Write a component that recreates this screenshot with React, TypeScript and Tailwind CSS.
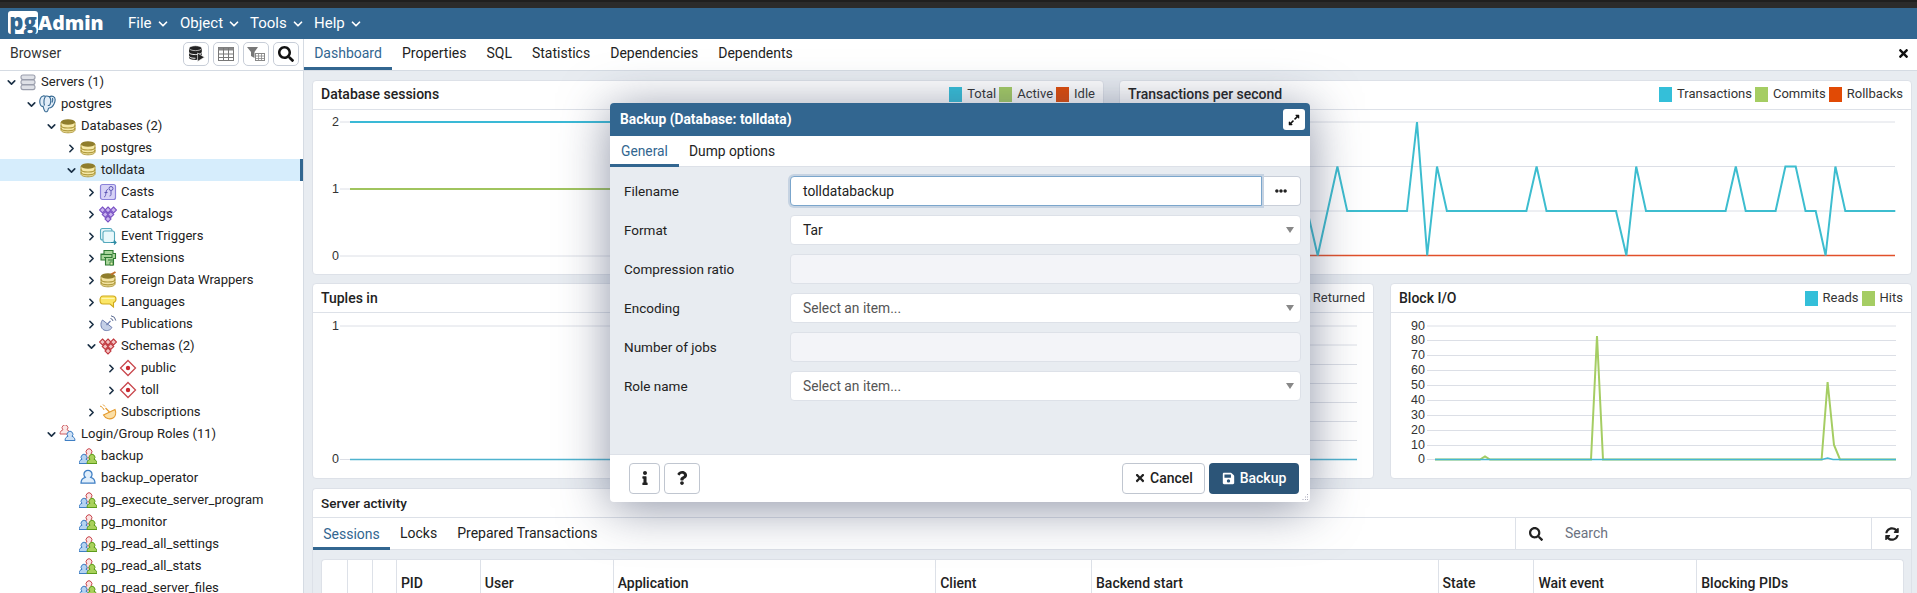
import React from "react";
import { ChevronDown, ChevronRight } from "lucide-react";
import { FaTimes, FaSave, FaInfo, FaQuestion, FaExpandAlt, FaSearch, FaSyncAlt, FaEllipsisH } from "react-icons/fa";

const S = ({ children }: { children: React.ReactNode }) => (
  <svg width="18" height="18" viewBox="0 0 18 18" className="shrink-0">{children}</svg>
);

const DbStack = ({ top = "#8f7d2c", fill = "#f6e9a8", line = "#b09a3d" }) => (
  <>
    <path d="M2 5v8c0 1.600 3.200 2.800 7 2.800s7-1.200 7-2.800V5z" fill={fill} stroke={line} strokeWidth="1" />
    <path d="M2 8.200c0 1.600 3.200 2.800 7 2.800s7-1.200 7-2.800M2 11c0 1.600 3.200 2.800 7 2.800s7-1.200 7-2.800" fill="none" stroke={line} strokeWidth="1.200" />
    <ellipse cx="9" cy="5" rx="7" ry="2.800" fill={top} />
  </>
);

const Diamonds = ({ c, f }: { c: string; f: string }) => (
  <>
    {[[3.5, 5], [9, 5], [14.5, 5], [6.25, 9.500], [11.75, 9.500], [9, 14]].map(([x, y], i) => (
      <path key={i} d={`M${x} ${y - 3}L${x + 3} ${y}L${x} ${y + 3}L${x - 3} ${y}z`} fill={f} stroke={c} strokeWidth="1.100" />
    ))}
  </>
);

const User = ({ x, y, c, f }: { x: number; y: number; c: string; f: string }) => (
  <g transform={`translate(${x} ${y})`}>
    <path d="M0 8c0-2.600 1.600-3.800 3-4.200a2.900 2.900 0 1 1 4 0c1.400.4 3 1.600 3 4.200z" fill={f} stroke={c} strokeWidth="1" />
  </g>
);

const icons: Record<string, React.ReactNode> = {
  servers: (
    <S>
      {[2, 7, 12].map((y) => (
        <rect key={y} x="2" y={y} width="14" height="4.600" rx="2" fill="#dfe1e7" stroke="#9a9eac" strokeWidth="1.100" />
      ))}
    </S>
  ),
  pg: (
    <svg width="18" height="18" viewBox="0 0 18 18" className="shrink-0">
      <path d="M4 1C1.500 1.500.3 5 1 8.500c.4 2 1.800 3.400 3 2.800.5 1.200.7 3.700 2 5 1.200 1 2.700.5 3-1.300.2-1.200.3-2 1-2 2.500 0 3.800-1.500 5-4 1.300-2.800 1.800-6.200-.7-7.500-1.600-.7-3-.3-3.800.2C9 1 7.500.8 6.500 1.200 5.800 1 4.800.8 4 1z" fill="#e2edf8" stroke="#336791" strokeWidth="1.100" />
      <path d="M6.500 1.500C5 3.500 4.500 7 5.500 10.500M10.500 1.800c1.300 1.700 1.500 5 .6 7.500-.4 1-1.300 1.400-2.300 1.200M13.500 3c.5 1.300.3 3-.5 4.500" fill="none" stroke="#336791" strokeWidth="1.100" />
    </svg>
  ),
  db: <S><DbStack /></S>,
  casts: (
    <S>
      <rect x="1.500" y="1.500" width="15" height="15" rx="2" fill="#d7d3f6" stroke="#8b82d9" strokeWidth="1.200" />
      <path d="M5 14c1-.3 1.500-1 1.700-2.500L7.300 8c.2-1 .8-1.500 1.700-1.500M5.500 9.500h3" fill="none" stroke="#5e57b5" strokeWidth="1" />
      <circle cx="12" cy="5.500" r="2" fill="none" stroke="#5e57b5" strokeWidth="1" />
      <path d="M12 8v3.500c0 1-.7 1.500-1.500 1.500" fill="none" stroke="#5e57b5" strokeWidth="1" />
    </S>
  ),
  catalogs: <S><Diamonds c="#7a52c4" f="#c9b3ee" /></S>,
  triggers: (
    <S>
      <rect x="1.500" y="1.500" width="11.500" height="11.500" rx="2" fill="#e3f5f8" stroke="#55a9bd" strokeWidth="1.100" />
      <rect x="4" y="4" width="11.500" height="11.500" rx="2" fill="#e8f8fb" stroke="#55a9bd" strokeWidth="1.100" />
      <path d="M12 15.500h4.500M15 13.500l2 2-2 2" fill="none" stroke="#2c8aa3" strokeWidth="1.200" />
    </S>
  ),
  ext: (
    <S>
      <path d="M5 1.500h9v3h2.500v5h-2v6.500H6.500v-5H2V5h3z" fill="#a9d59b" stroke="#2f7a33" strokeWidth="1.100" />
      <path d="M2 5.500h11v3H5M6.500 11v-2.500M9 11h5" fill="none" stroke="#2f7a33" strokeWidth="1.100" />
      <path d="M11 13h3v3h-3z" fill="#dff0b0" stroke="#2f7a33" strokeWidth=".8" />
    </S>
  ),
  fdw: (
    <S>
      <DbStack top="#8f7d2c" fill="#f3e3a1" />
      <path d="M12 3.500l4.500-2.500" stroke="#c2702c" strokeWidth="2" fill="none" />
    </S>
  ),
  lang: (
    <S>
      <path d="M4 3h10c2 0 3 1.300 3 3s-1 3-2.500 3.500V14l-3.500-3H4C2 11 1 9 1 7s1-4 3-4z" fill="#fbe666" stroke="#d0a91c" strokeWidth="1.100" />
      <path d="M2.500 5.500h13" stroke="#fff6b0" strokeWidth="1" />
    </S>
  ),
  pub: (
    <S>
      <path d="M3.500 5C.8 8.500 1.800 13.500 5 15c3 1.300 6.500.3 8-2.500z" fill="#c4cfe6" stroke="#6f7fb0" strokeWidth="1" />
      <path d="M7.500 10l4-4" stroke="#6f7fb0" strokeWidth="1.200" />
      <path d="M11.500 3.500a3 3 0 0 1 2.500 2.500M12 .8a5.500 5.500 0 0 1 4.800 4.800" fill="none" stroke="#58688f" strokeWidth="1" />
    </S>
  ),
  schemas: <S><Diamonds c="#c0393f" f="#f3c4c4" /></S>,
  schema: (
    <S>
      <path d="M9 1.500L16.500 9 9 16.500 1.500 9z" fill="#fff" stroke="#c9474d" strokeWidth="1.300" />
      <circle cx="9" cy="9" r="2.200" fill="#c9272f" />
    </S>
  ),
  subs: (
    <S>
      <path d="M16 6.500c1.500 3.500.5 7-2 8.500-3.500 2-7.500.5-9.500-3z" fill="#fbdfa6" stroke="#e49a2e" strokeWidth="1.100" />
      <path d="M10.500 9L6.500 5" stroke="#e49a2e" strokeWidth="1.200" />
      <path d="M5 7a3 3 0 0 0-2-2.500M4 1.500l2 2M1 3l2 1" fill="none" stroke="#e49a2e" strokeWidth="1" />
    </S>
  ),
  roles: (
    <S>
      <User x={1} y={1} c="#cc5f63" f="#fbe7e7" />
      <User x={6} y={7.500} c="#3f7fc4" f="#cfe2f6" />
    </S>
  ),
  group: (
    <S>
      <User x={5} y={3} c="#c9474d" f="#fbe3e3" />
      <User x={0} y={8.500} c="#3f7fc4" f="#b5d3f1" />
      <User x={8} y={8.500} c="#5d9c1c" f="#a9d15b" />
    </S>
  ),
  role: (
    <S>
      <g transform="translate(2 3) scale(1.400)">
        <path d="M0 8c0-2.600 1.600-3.800 3-4.200a2.900 2.900 0 1 1 4 0c1.400.4 3 1.600 3 4.200z" fill="#e0eefb" stroke="#3f7fc4" strokeWidth=".9" />
      </g>
    </S>
  ),
};

const levelPad = ["pl-[5px]", "pl-[25px]", "pl-[45px]", "pl-[65px]", "pl-[85px]", "pl-[105px]"];

const rows: [number, "d" | "r" | "", string, string, boolean?][] = [
  [0, "d", "servers", "Servers (1)"],
  [1, "d", "pg", "postgres"],
  [2, "d", "db", "Databases (2)"],
  [3, "r", "db", "postgres"],
  [3, "d", "db", "tolldata", true],
  [4, "r", "casts", "Casts"],
  [4, "r", "catalogs", "Catalogs"],
  [4, "r", "triggers", "Event Triggers"],
  [4, "r", "ext", "Extensions"],
  [4, "r", "fdw", "Foreign Data Wrappers"],
  [4, "r", "lang", "Languages"],
  [4, "r", "pub", "Publications"],
  [4, "d", "schemas", "Schemas (2)"],
  [5, "r", "schema", "public"],
  [5, "r", "schema", "toll"],
  [4, "r", "subs", "Subscriptions"],
  [2, "d", "roles", "Login/Group Roles (11)"],
  [3, "", "group", "backup"],
  [3, "", "role", "backup_operator"],
  [3, "", "group", "pg_execute_server_program"],
  [3, "", "group", "pg_monitor"],
  [3, "", "group", "pg_read_all_settings"],
  [3, "", "group", "pg_read_all_stats"],
  [3, "", "group", "pg_read_server_files"],
];

const ToolBtn = ({ children }: { children: React.ReactNode }) => (
  <div className="w-[26px] h-[24px] rounded-[5px] border border-[#c8ced8] bg-white flex items-center justify-center">{children}</div>
);

const Sidebar = () => (
  <aside className="w-[304px] shrink-0 border-r border-[#d5dbe3] bg-white flex flex-col overflow-hidden">
    <div className="h-[32px] shrink-0 border-b border-[#d5dbe3] flex items-center justify-between pl-[10px] pr-[4px] pb-[2px]">
      <span className="text-[14px] text-[#333]">Browser</span>
      <div className="flex gap-[4px]">
        <ToolBtn>
          <svg width="17" height="17" viewBox="0 0 16 16">
            <path d="M1 3v9c0 1.200 2.500 2 6 2s6-.8 6-2V3z" fill="#222" />
            <ellipse cx="7" cy="3" rx="6" ry="2.300" fill="#222" stroke="#fff" strokeWidth=".6" />
            <path d="M1 7c0 1.200 2.500 2 6 2s6-.8 6-2M1 10.500c0 1.200 2.500 2 6 2" stroke="#fff" fill="none" strokeWidth=".9" />
            <path d="M9 7.500l6.500 4-6.500 4z" fill="#222" stroke="#fff" strokeWidth=".6" />
          </svg>
        </ToolBtn>
        <ToolBtn>
          <svg width="16" height="14" viewBox="0 0 16 14">
            <rect x=".5" y=".5" width="15" height="13" fill="#fff" stroke="#777" />
            <rect x=".5" y=".5" width="15" height="3" fill="#888" />
            <path d="M5.500 1v12M10.500 1v12M1 7h14M1 10.500h14" stroke="#777" />
          </svg>
        </ToolBtn>
        <ToolBtn>
          <svg width="18" height="16" viewBox="0 0 18 16">
            <path d="M0 1h11L7.500 6v6L4 10V6z" fill="#777" />
            <rect x="8.500" y="7.500" width="9" height="7" fill="#fff" stroke="#888" />
            <path d="M8.500 10h9M8.500 12.500h9M11.500 8v7M14.500 8v7" stroke="#888" strokeWidth=".8" />
          </svg>
        </ToolBtn>
        <ToolBtn>
          <FaSearch size={16} color="#111" />
        </ToolBtn>
      </div>
    </div>
    <div className="flex flex-col text-[13.050px] text-[#222]">
      {rows.map(([lvl, chev, icon, label, sel], i) => (
        <div key={i} className={`h-[22px] shrink-0 flex items-center ${levelPad[lvl]} ${sel ? "bg-[#d6edfc] border-r-[3px] border-[#326690]" : ""}`}>
          <span className="w-[13px] flex justify-center">
            {chev === "d" && <ChevronDown size={13} strokeWidth={3} color="#1c3146" />}
            {chev === "r" && <ChevronRight size={13} strokeWidth={3} color="#1c3146" />}
          </span>
          <span className="w-[20px] flex justify-center">{icons[icon]}</span>
          <span className="ml-[3px] whitespace-nowrap">{label}</span>
        </div>
      ))}
    </div>
  </aside>
);

const Legend = ({ items }: { items: [string, string][] }) => (
  <div className="flex items-center gap-[3px] text-[13px] text-[#333]">
    {items.map(([c, t]) => (
      <div key={t} className="flex items-center gap-[5px]">
        <span className="w-[13px] h-[15px] block" style={{ background: c }} />
        <span>{t}</span>
      </div>
    ))}
  </div>
);

const Panel = ({ title, legend, className, headerClass, children }: { title?: string; legend?: [string, string][]; className: string; headerClass: string; children: React.ReactNode }) => (
  <section className={`bg-white rounded-[4px] border border-[#dde1e8] flex flex-col overflow-hidden ${className}`}>
    <header className={`h-[29px] shrink-0 border-b border-[#dde1e8] flex items-center justify-between pl-[8px] pr-[8px] ${headerClass}`}>
      <span className="text-[14px] font-medium text-[#222] whitespace-nowrap">{title}</span>
      {legend && <Legend items={legend} />}
    </header>
    {children}
  </section>
);

const Chart = ({ x, y, w, h, children }: { x: number; y: number; w: number; h: number; children: React.ReactNode }) => (
  <svg width={w} height={h} viewBox={`${x} ${y} ${w} ${h}`} className="block">{children}</svg>
);

const Grid = ({ ys, x1, x2 }: { ys: number[]; x1: number; x2: number }) => (
  <>{ys.map((y) => <line key={y} x1={x1} x2={x2} y1={y} y2={y} stroke="#dcdfe6" strokeWidth="1" />)}</>
);

const Lab = ({ x, y, t }: { x: number; y: number; t: string }) => (
  <text x={x} y={y + 3.500} textAnchor="end" fontSize="12.500" fontFamily="'Liberation Sans',sans-serif" fill="#333">{t}</text>
);

const txPts: [number, number][] = [
  [1309, 218], [1317.700, 255.500], [1337.400, 166.500], [1347.200, 211], [1407, 211], [1417, 122], [1427.200, 255.500], [1437, 166.500], [1446.900, 211],
  [1526.400, 211], [1536.600, 166.500], [1546.500, 211], [1616, 211], [1626.400, 255.500], [1636.200, 166.500], [1646, 211],
  [1725.600, 211], [1735.800, 166.500], [1745.700, 211], [1775.600, 211], [1785.400, 166.500], [1795.700, 166.500], [1805.500, 211],
  [1815.700, 211], [1825.600, 255.500], [1835.400, 166.500], [1845.300, 211], [1895.300, 211],
];

const cols = [
  ["w-[25px]", ""], ["w-[25px]", ""], ["w-[24px]", ""], ["w-[84px]", "PID"], ["w-[133px]", "User"], ["w-[323px]", "Application"],
  ["w-[156px]", "Client"], ["w-[347px]", "Backend start"], ["w-[96px]", "State"], ["w-[163px]", "Wait event"], ["w-[207px]", "Blocking PIDs"],
];

const MainArea = () => (
  <main className="flex-1 min-w-0 flex flex-col">
    <div className="h-[32px] shrink-0 bg-white border-b border-[#d5dbe3] flex items-stretch text-[14px] text-[#222] relative">
      <div className="w-[88px] h-[31px] pt-[1px] border-b-[3px] border-[#326690] text-[#326690] flex items-center justify-center">Dashboard</div>
      {["Properties", "SQL", "Statistics", "Dependencies", "Dependents"].map((t) => (
        <div key={t} className="px-[10px] flex items-center pb-[2px]">{t}</div>
      ))}
      <div className="ml-auto pr-[7px] pb-[2px] flex items-center"><FaTimes size={13} color="#111" /></div>
    </div>
    <div className="flex-1 min-h-0 bg-[#e8ecf1] pl-[8px] pr-[5px] pt-[9px] flex flex-col gap-[8px] overflow-hidden">
      <div className="flex gap-[15px] h-[195px] shrink-0">
        <Panel title="Database sessions" headerClass="pb-[2px]" className="w-[792px]" legend={[["#34bfd9", "Total"], ["#a5cd63", "Active"], ["#e14a05", "Idle"]]}>
          <Chart x={313} y={110} w={789} h={164}>
            <Grid ys={[122, 189, 256]} x1={340} x2={1090} />
            <Lab x={339} y={122} t="2" />
            <Lab x={339} y={189} t="1" />
            <Lab x={339} y={256} t="0" />
            <line x1={350} x2={1090} y1={122} y2={122} stroke="#3ab9d6" strokeWidth="2" />
            <line x1={350} x2={1090} y1={189} y2={189} stroke="#a0c45e" strokeWidth="2" />
          </Chart>
        </Panel>
        <Panel title="Transactions per second" headerClass="pb-[2px]" className="w-[793px]" legend={[["#34bfd9", "Transactions"], ["#a5cd63", "Commits"], ["#e14a05", "Rollbacks"]]}>
          <Chart x={1120} y={110} w={791} h={164}>
            <Grid ys={[122, 166.500, 211, 255.500]} x1={1160} x2={1895} />
            <line x1={1160} x2={1895} y1={255.500} y2={255.500} stroke="#e1502a" strokeWidth="1.500" />
            <polyline points={txPts.map((p) => p.join(",")).join(" ")} fill="none" stroke="#3dbdcf" strokeWidth="2" />
          </Chart>
        </Panel>
      </div>
      <div className="flex h-[196px] shrink-0 gap-[16px]">
        <Panel title="Tuples in" headerClass="pb-0" className="w-[523px]">
          <Chart x={313} y={313} w={521} h={165}>
            <Grid ys={[326, 459.500]} x1={340} x2={830} />
            <Lab x={339} y={326} t="1" />
            <Lab x={339} y={459.500} t="0" />
            <line x1={350} x2={830} y1={459.500} y2={459.500} stroke="#4fb3cf" strokeWidth="1.500" />
          </Chart>
        </Panel>
        <Panel headerClass="pb-0" className="w-[523px]" legend={[["#a5cd63", "Returned"]]}>
          <Chart x={852} y={313} w={521} h={165}>
            <Grid ys={[326, 345, 364.500, 383.500, 402.500, 421.500, 440.500]} x1={880} x2={1357} />
            <line x1={885} x2={1357} y1={459.500} y2={459.500} stroke="#4fb3cf" strokeWidth="1.500" />
          </Chart>
        </Panel>
        <Panel title="Block I/O" headerClass="pb-0" className="w-[522px]" legend={[["#34bfd9", "Reads"], ["#a5cd63", "Hits"]]}>
          <Chart x={1391} y={313} w={520} h={165}>
            <Grid ys={[326, 340.500, 355.500, 370.500, 385.500, 400.500, 415.500, 430.500, 445.500, 459.500]} x1={1427} x2={1896} />
            {[["90", 326], ["80", 340.500], ["70", 355.500], ["60", 370.500], ["50", 385.500], ["40", 400.500], ["30", 415.500], ["20", 430.500], ["10", 445.500], ["0", 459.500]].map(([t, y]) => (
              <Lab key={t as string} x={1425} y={y as number} t={t as string} />
            ))}
            <polyline points="1435,459.500 1480,459.500 1485,456.500 1490,459.500 1591,459.500 1597,336 1603,459.500 1821.600,459.500 1827.600,382 1834,445 1840,459.500 1896,459.500" fill="none" stroke="#a5cd63" strokeWidth="2" />
            <polyline points="1435,459.500 1822,459.500 1827.600,458 1833,459.500 1896,459.500" fill="none" stroke="#45b7d3" strokeWidth="1.500" />
          </Chart>
        </Panel>
      </div>
      <section className="flex-1 mt-[1px] bg-white rounded-t-[4px] border border-[#dde1e8] border-b-0 flex flex-col">
        <header className="h-[29px] shrink-0 border-b border-[#dde1e8] flex items-center pl-[8px] text-[13.500px] font-medium text-[#222]">Server activity</header>
        <div className="h-[32px] shrink-0 flex border-b border-[#dde1e8] text-[14px] text-[#222]">
          <div className="w-[77px] h-[32px] pt-[3px] border-b-[3px] border-[#326690] text-[#326690] flex items-center justify-center">Sessions</div>
          <div className="px-[10px] flex items-center">Locks</div>
          <div className="px-[10px] flex items-center">Prepared Transactions</div>
          <div className="ml-auto w-[356px] border-l border-[#dde1e8] flex items-center pl-[13px] gap-[22px]">
            <FaSearch size={14} color="#222" />
            <span className="text-[#6b7280]">Search</span>
          </div>
          <div className="w-[40px] border-l border-[#dde1e8] flex items-center justify-center"><FaSyncAlt size={14} color="#222" /></div>
        </div>
        <div className="flex-1 bg-[#e8ecf1] pt-[9px] pl-[8px]">
          <div className="flex h-[60px] w-[1583px] bg-white rounded-t-[4px] border border-[#dde1e8] border-b-0">
            {cols.map(([w, t], i) => (
              <div key={i} className={`${w} ${i ? "border-l border-[#dde1e8]" : ""} pl-[4px] pt-[13px] text-[14px] font-medium text-[#222] whitespace-nowrap`}>{t}</div>
            ))}
          </div>
        </div>
      </section>
    </div>
  </main>
);

const Field = ({ label, children }: { label: string; children: React.ReactNode }) => (
  <div className="flex items-center h-[30px]">
    <label className="w-[166px] shrink-0 text-[13.500px] text-[#222]">{label}</label>
    {children}
  </div>
);

const Select = ({ value, muted }: { value: string; muted?: boolean }) => (
  <div className={`flex-1 h-[30px] bg-white rounded-[4px] border border-[#dde1e8] flex items-center justify-between pl-[12px] pr-[6px] text-[13.800px] ${muted ? "text-[#555]" : "text-[#222]"}`}>
    <span>{value}</span>
    <span className="w-0 h-0 border-l-[4px] border-r-[4px] border-t-[6px] border-l-transparent border-r-transparent border-t-[#888]" />
  </div>
);

const Disabled = () => <div className="flex-1 h-[30px] bg-[#f3f4f8] rounded-[4px] border border-[#dde1e8]" />;

const Dialog = () => (
  <div className="absolute left-[610px] top-[103px] w-[700px] h-[399px] rounded-[4px] bg-white flex flex-col shadow-[0_6px_50px_rgba(65,75,105,0.6)]">
    <div className="h-[33px] shrink-0 bg-[#326690] rounded-t-[4px] flex items-center justify-between pl-[10px] pr-[5px]">
      <span className="text-[13.800px] font-bold text-white">Backup (Database: tolldata)</span>
      <div className="w-[22px] h-[21px] bg-white rounded-[3px] flex items-center justify-center"><FaExpandAlt size={12} color="#111" /></div>
    </div>
    <div className="h-[31px] shrink-0 flex border-b border-[#dde1e8] text-[13.800px] text-[#222]">
      <div className="w-[69px] h-[31px] pt-[3px] border-b-[3px] border-[#326690] text-[#326690] flex items-center justify-center">General</div>
      <div className="px-[10px] flex items-center">Dump options</div>
    </div>
    <div className="h-[287px] shrink-0 bg-[#e8ecf1] pl-[14px] pr-[9px] pt-[9px] flex flex-col gap-[9px]">
      <Field label="Filename">
        <div className="flex-1 flex h-[30px] bg-white rounded-[4px]">
          <div className="flex-1 rounded-l-[4px] border border-[#7ba6cc] shadow-[0_0_0_2px_#c6d3e2] flex items-center pl-[12px] text-[13.800px] text-[#222] bg-white z-10">tolldatabackup</div>
          <div className="w-[39px] border border-l-0 border-[#c8ced8] rounded-r-[4px] flex items-center justify-center"><FaEllipsisH size={12} color="#222" /></div>
        </div>
      </Field>
      <Field label="Format"><Select value="Tar" /></Field>
      <Field label="Compression ratio"><Disabled /></Field>
      <Field label="Encoding"><Select value="Select an item..." muted /></Field>
      <Field label="Number of jobs"><Disabled /></Field>
      <Field label="Role name"><Select value="Select an item..." muted /></Field>
    </div>
    <div className="flex-1 border-t border-[#dde1e8] flex items-center justify-between pl-[19px] pr-[11px] pb-[1px] relative">
      <div className="flex gap-[4px]">
        <div className="w-[31px] h-[31px] border border-[#c0c6d0] rounded-[4px] flex items-center justify-center"><FaInfo size={14} color="#222" /></div>
        <div className="w-[36px] h-[31px] border border-[#c0c6d0] rounded-[4px] flex items-center justify-center"><FaQuestion size={14} color="#222" /></div>
      </div>
      <div className="flex gap-[4px] text-[14px]">
        <div className="w-[83px] h-[31px] border border-[#c0c6d0] rounded-[4px] flex items-center justify-center gap-[4px] text-[#222] font-medium"><FaTimes size={12} color="#222" />Cancel</div>
        <div className="w-[90px] h-[31px] bg-[#2c5578] rounded-[4px] flex items-center justify-center gap-[5px] text-white font-medium"><FaSave size={13} color="#fff" />Backup</div>
      </div>
      <svg width="8" height="8" viewBox="0 0 8 8" className="absolute right-[1px] bottom-[1px]">
        <path d="M6 1h1v1H6zM4 3.500h1v1H4zM6 3.500h1v1H6zM1.500 6h1v1h-1zM4 6h1v1H4zM6 6h1v1H6z" fill="#aab" />
      </svg>
    </div>
  </div>
);

export default function App() {
  return (
    <div className="relative w-[1917px] h-[593px] overflow-hidden flex flex-col bg-white [font-family:Roboto,sans-serif]">
      <div className="h-[8px] shrink-0 bg-[#2b2b2b] border-t-[2px] border-[#1f1f1f]" />
      <nav className="h-[31px] shrink-0 bg-[#326690] flex items-center text-white text-[15px]">
        <div className="ml-[8px] mb-[2px] w-[30px] h-[23px] bg-white rounded-[3px] flex items-center justify-center text-[#326690] font-extrabold text-[22px] leading-none pb-[4px] [font-family:'Open_Sans',sans-serif]">pg</div>
        <span className="w-[90px] text-[19.500px] font-extrabold leading-none pb-[1px] [font-family:'Open_Sans',sans-serif]">Admin</span>
        {[["File", "w-[52px]"], ["Object", "w-[70px]"], ["Tools", "w-[64px]"], ["Help", "w-[60px]"]].map(([t, w]) => (
          <div key={t} className={`flex items-center gap-[4px] ${w}`}>
            <span>{t}</span>
            <ChevronDown size={14} strokeWidth={3} />
          </div>
        ))}
      </nav>
      <div className="flex-1 min-h-0 flex">
        <Sidebar />
        <MainArea />
      </div>
      <Dialog />
    </div>
  );
}
